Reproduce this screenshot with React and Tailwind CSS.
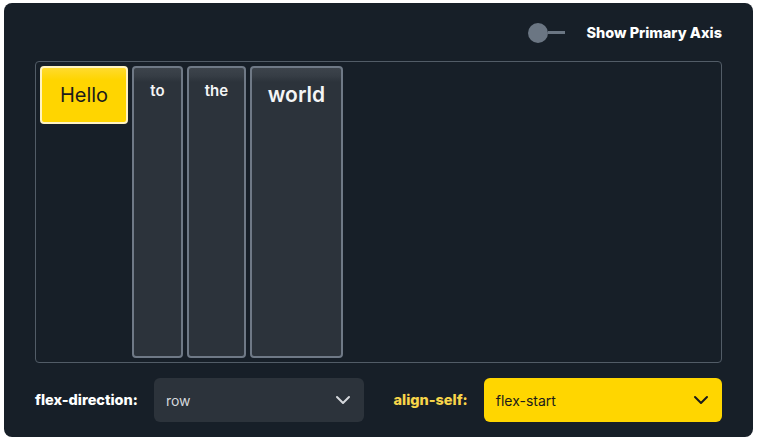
function Chevron({ color }) {
  return (
    <svg width="16" height="10" viewBox="0 0 16 10" fill="none">
      <path d="M2 2l6 6 6-6" stroke={color} strokeWidth="2" strokeLinecap="round" strokeLinejoin="round" />
    </svg>
  )
}

const items = [
  { label: 'to', w: 'w-[51px]', text: 'text-[15px] pt-[12px]' },
  { label: 'the', w: 'w-[59px]', text: 'text-[15px] pt-[12px]' },
  { label: 'world', w: 'w-[93px]', text: 'text-[21px] pt-[11px]' },
]

export default function App() {
  return (
    <div className="h-screen bg-white pl-[4px] pt-[3px] font-['Inter',sans-serif]">
      <div className="flex h-[434px] w-[749px] flex-col rounded-lg bg-[#171f28] px-[31px]">
        <div className="flex h-[58px] items-center justify-end pt-[1px]">
          <div className="flex items-center">
            <div className="h-[20px] w-[20px] rounded-full bg-[#6b7683]" />
            <div className="h-[3px] w-[17px] bg-[#6b7683]" />
          </div>
          <span className="ml-[21px] text-[14.5px] font-extrabold text-white">
            Show Primary Axis
          </span>
        </div>

        <div className="flex h-[302px] items-start gap-[4px] rounded-[4px] border border-[#525c67] p-[4px]">
          <div className="flex h-[58px] w-[88px] items-center justify-center rounded-[4px] border-2 border-[#fff3c2] bg-[linear-gradient(to_bottom,#ffdb2e_0px,#ffd500_12px)] text-[20px] text-[#1b1b1b]">
            Hello
          </div>
          {items.map((item) => (
            <div
              key={item.label}
              className={`flex h-[292px] ${item.w} justify-center rounded-[4px] border-2 border-[#6f7986] bg-[linear-gradient(to_bottom,#3d444c_0px,#363d45_8px,#2c333b_14px)] font-semibold text-[#f4f5f6] ${item.text}`}
            >
              {item.label}
            </div>
          ))}
        </div>

        <div className="mt-[15px] grid grid-cols-2 gap-[30px]">
          <div className="flex items-center">
            <span className="text-[14.5px] font-extrabold text-white">flex-direction:</span>
            <div className="ml-[16px] flex h-[44px] flex-1 items-center justify-between rounded-md bg-[#2c333b] pl-[12px] pr-[13px]">
              <span className="text-[14px] text-[#d5d8dc]">row</span>
              <Chevron color="#d5d8dc" />
            </div>
          </div>
          <div className="flex items-center">
            <span className="text-[14.5px] font-extrabold text-[#f8d54a]">align-self:</span>
            <div className="ml-[16px] flex h-[44px] flex-1 items-center justify-between rounded-md bg-[#ffd600] pl-[12px] pr-[13px]">
              <span className="text-[14px] text-[#1b1b1b]">flex-start</span>
              <Chevron color="#1b1b1b" />
            </div>
          </div>
        </div>
      </div>
    </div>
  )
}
